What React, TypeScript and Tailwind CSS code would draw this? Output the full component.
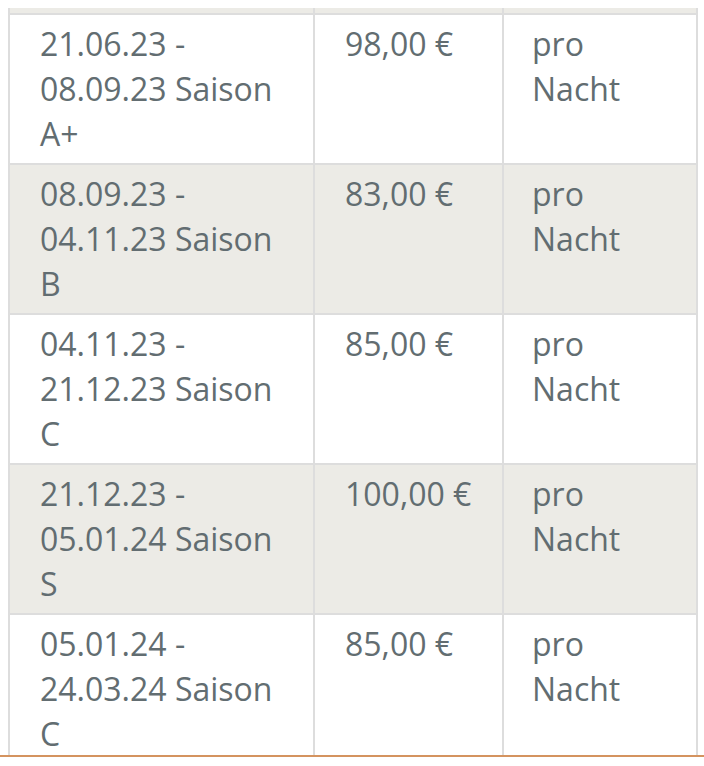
const rows = [
  { period: "21.06.23 - 08.09.23 Saison A+", price: "98,00 €", unit: "pro Nacht" },
  { period: "08.09.23 - 04.11.23 Saison B", price: "83,00 €", unit: "pro Nacht" },
  { period: "04.11.23 - 21.12.23 Saison C", price: "85,00 €", unit: "pro Nacht" },
  { period: "21.12.23 - 05.01.24 Saison S", price: "100,00 €", unit: "pro Nacht" },
  { period: "05.01.24 - 24.03.24 Saison C", price: "85,00 €", unit: "pro Nacht" },
];

function Cell({
  children,
  shaded,
  tight = false,
}: {
  children?: React.ReactNode;
  shaded: boolean;
  tight?: boolean;
}) {
  return (
    <div
      className={`h-[148px] ${tight ? "pl-[28px]" : "pl-[30px]"} pr-[26px] pt-[7px] text-[32px] leading-[44.8px] text-[#626d71] ${
        shaded ? "bg-[#ecebe6]" : "bg-white"
      }`}
    >
      {children}
    </div>
  );
}

export default function App() {
  return (
    <div
      className="w-[704px] h-[766px] bg-white overflow-hidden pt-[8px]"
      style={{ fontFamily: '"Open Sans", "Noto Sans", sans-serif' }}
    >
      {/* Price table (scrolled, partial previous row on top) */}
      <div className="mx-[8px] w-[690px] h-[747px] overflow-hidden bg-[#dddddd] px-[2px]">
        <div className="grid grid-cols-[303px_187px_192px] gap-[2px]">
          <div className="h-[5px] bg-[#ecebe6]" />
          <div className="h-[5px] bg-[#ecebe6]" />
          <div className="h-[5px] bg-[#ecebe6]" />
          {rows.map((r, i) => {
            const shaded = i % 2 === 1;
            return [
              <Cell key={`p${i}`} shaded={shaded}>{r.period}</Cell>,
              <Cell key={`c${i}`} shaded={shaded}>{r.price}</Cell>,
              <Cell key={`u${i}`} shaded={shaded} tight>{r.unit}</Cell>,
            ];
          })}
        </div>
      </div>
      <div className="h-[2px] bg-[#d4935f]" />
    </div>
  );
}
